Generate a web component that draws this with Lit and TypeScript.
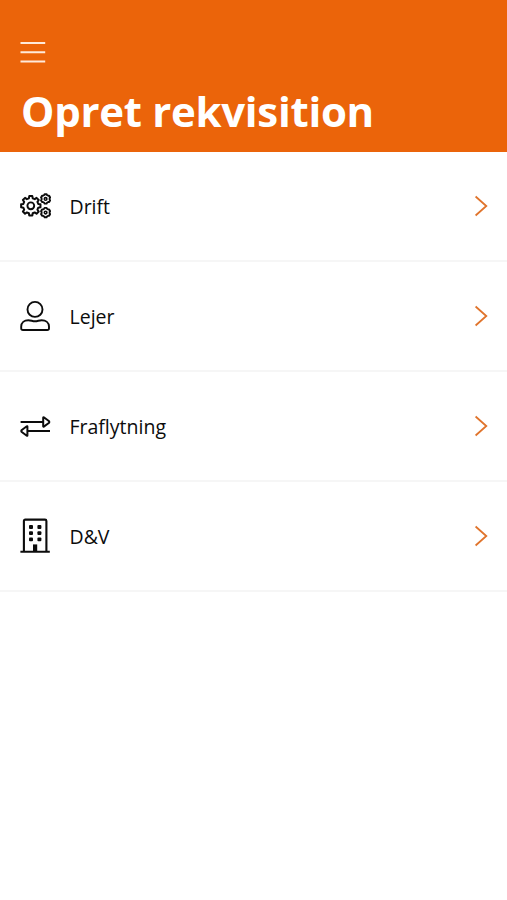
import { LitElement, html, svg, css } from "lit";
import { customElement } from "lit/decorators.js";

// Outline of a gear: each tooth is a flat top with sloped sides.
function gear(cx: number, cy: number, outer: number, inner: number, teeth: number, turn = 0): string {
  const step = (Math.PI * 2) / teeth;
  const pts: string[] = [];
  for (let i = 0; i < teeth; i++) {
    const a = i * step + turn;
    for (const [r, o] of [[inner, -0.32], [outer, -0.2], [outer, 0.2], [inner, 0.32]]) {
      const t = a + o * step;
      pts.push(`${(cx + r * Math.cos(t)).toFixed(2)} ${(cy + r * Math.sin(t)).toFixed(2)}`);
    }
  }
  return `M${pts.join("L")}Z`;
}

const icons = {
  gears: svg`
    <path d=${gear(11.8, 17.8, 9.8, 7.7, 8)} stroke-width="2"/>
    <circle cx="11.8" cy="17.8" r="3.4" stroke-width="1.9"/>
    <path d=${gear(26.6, 10.9, 4.8, 4.1, 6, Math.PI / 6)} stroke-width="1.9"/>
    <circle cx="26.6" cy="10.9" r="1.3" stroke-width="1.6"/>
    <path d=${gear(26.6, 24.6, 4.8, 4.1, 6, Math.PI / 6)} stroke-width="1.9"/>
    <circle cx="26.6" cy="24.6" r="1.3" stroke-width="1.6"/>`,
  person: svg`
    <circle cx="16" cy="11.4" r="7.5" stroke-width="1.9"/>
    <path d="M2.2 30.2V28.6C2.2 24.6 5.2 22.2 9.4 22.2C12 22.2 13.4 23.3 16 23.3S20 22.2 22.6 22.2C26.8 22.2 30 24.6 30 28.6V30.2Q30 32 28.2 32H4Q2.2 32 2.2 30.2Z" stroke-width="1.9"/>`,
  arrows: svg`
    <path d="M1.6 14.1H24M24.2 9.7V18.3Q24.2 19 24.8 18.6L29.8 15Q30.8 14 29.8 13L24.8 9.3Q24.2 9 24.2 9.7ZM31 23H8.4M8.4 18.6V27.4Q8.4 28.1 7.8 27.7L2.8 24Q1.8 23 2.8 22L7.8 18.3Q8.4 17.9 8.4 18.6Z" stroke-width="2"/>`,
  building: svg`
    <path d="M4.9 33.5V3Q4.9 1.6 6.3 1.6H26Q27.4 1.6 27.4 3V33.5M1.4 33.7H30.8" stroke-width="2.1"/>
    <path d="M14 26.4h4.2v7.6H14z" fill="currentColor" stroke="none"/>
    <g fill="currentColor" stroke="none">
      <rect x="10" y="7" width="4" height="3.9" rx="1"/><rect x="18.4" y="7" width="4" height="3.9" rx="1"/>
      <rect x="10" y="13.2" width="4" height="3.9" rx="1"/><rect x="18.4" y="13.2" width="4" height="3.9" rx="1"/>
      <rect x="10" y="19.4" width="4" height="3.9" rx="1"/><rect x="18.4" y="19.4" width="4" height="3.9" rx="1"/>
    </g>`,
};

const items = [
  { label: "Drift", icon: icons.gears },
  { label: "Lejer", icon: icons.person },
  { label: "Fraflytning", icon: icons.arrows },
  { label: "D&V", icon: icons.building },
];

@customElement("app-root")
export class AppRoot extends LitElement {
  static styles = css`
    :host {
      display: block;
      min-height: 100vh;
      background: #fff;
      color: #0c0c0c;
      font-family: "Open Sans", sans-serif;
    }
    header {
      box-sizing: border-box;
      height: 152px;
      padding: 41px 21px 0;
      background: #eb640a;
      color: #fff;
    }
    .menu {
      display: block;
      width: 26px;
      height: 23px;
      margin-left: -1px;
      stroke: #ffeadb;
      stroke-width: 2;
    }
    h1 {
      margin: 18px 0 0;
      font-size: 42px;
      line-height: 58px;
      font-weight: 700;
      letter-spacing: -0.3px;
      white-space: nowrap;
    }
    .row {
      box-sizing: border-box;
      display: flex;
      align-items: center;
      height: 110px;
      padding: 0 19px;
      border-bottom: 2px solid #f6f6f6;
    }
    .icon {
      width: 32px;
      height: 36px;
      fill: none;
      stroke: currentColor;
      stroke-linejoin: round;
    }
    .label {
      flex: 1;
      margin-left: 18.5px;
      padding-top: 1px;
      font-size: 19.5px;
      line-height: 28px;
    }
    .chevron {
      width: 14px;
      height: 22px;
      fill: none;
      stroke: #e0742c;
      stroke-width: 1.8;
    }
  `;

  render() {
    return html`
      <header>
        <svg class="menu" viewBox="0 0 26 23"><path d="M.5 2H25.2M.5 11.3H25.2M.5 20.5H25.2" /></svg>
        <h1>Opret rekvisition</h1>
      </header>
      <main>
        ${items.map(
          (item) => html`
            <div class="row">
              <svg class="icon" viewBox="0 0 32 36">${item.icon}</svg>
              <span class="label">${item.label}</span>
              <svg class="chevron" viewBox="0 0 14 22"><path d="M1.6 1.5L12.3 11L1.6 20.5" /></svg>
            </div>
          `,
        )}
      </main>
    `;
  }
}
